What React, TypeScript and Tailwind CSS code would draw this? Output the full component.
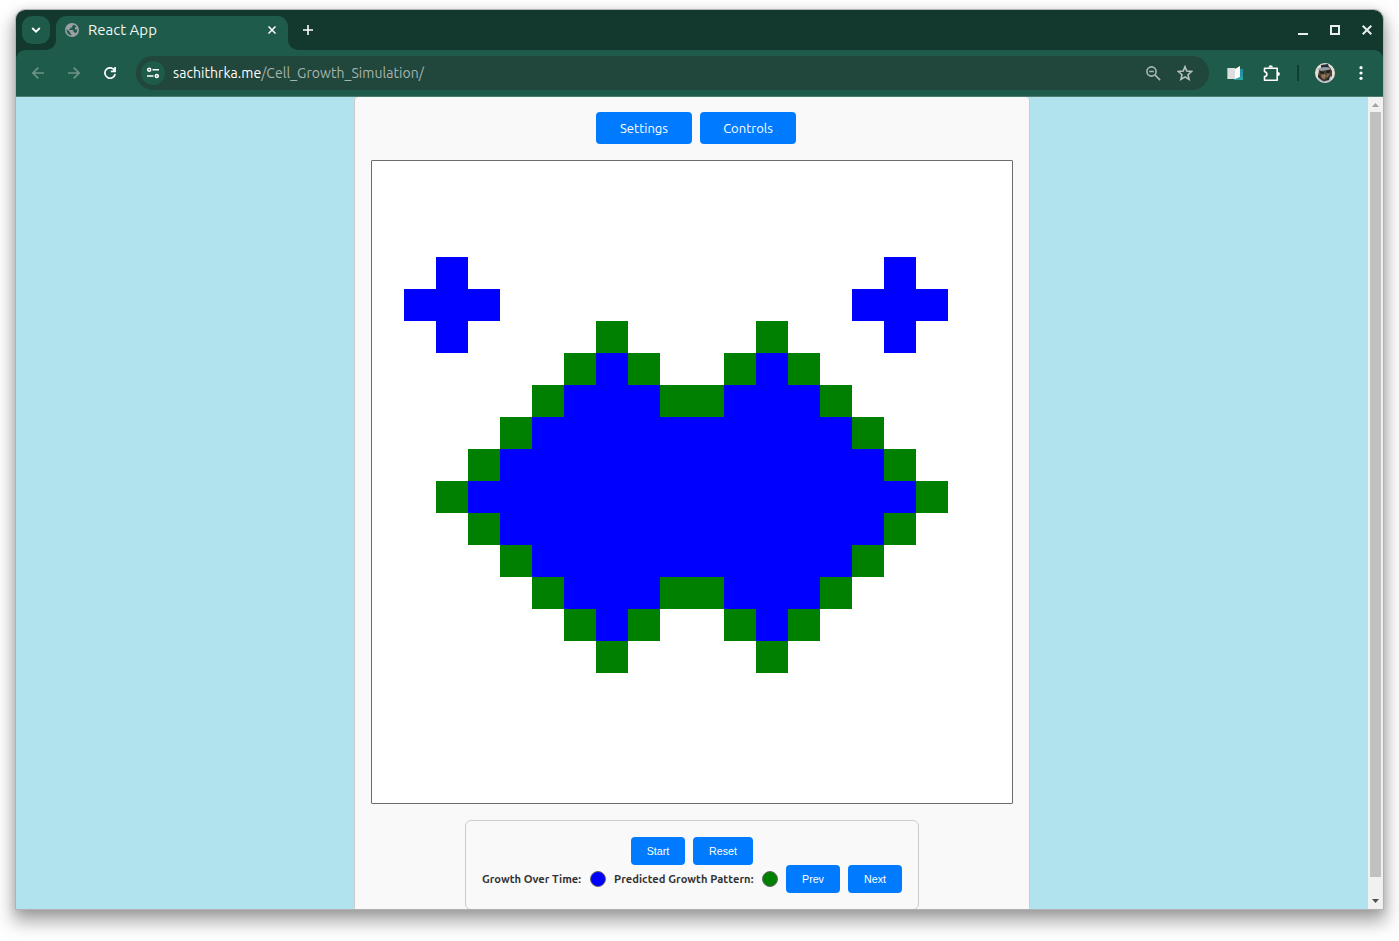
import React from 'react'

const ROWS = [
  '....................',
  '....................',
  '....................',
  '..b.............b...',
  '.bbb...........bbb..',
  '..b....g....g...b...',
  '......gbg..gbg......',
  '.....gbbbggbbbg.....',
  '....gbbbbbbbbbbg....',
  '...gbbbbbbbbbbbbg...',
  '..gbbbbbbbbbbbbbbg..',
  '...gbbbbbbbbbbbbg...',
  '....gbbbbbbbbbbg....',
  '.....gbbbggbbbg.....',
  '......gbg..gbg......',
  '.......g....g.......',
  '....................',
  '....................',
  '....................',
  '....................',
]

const CELL: Record<string, string> = {
  b: 'bg-[#0000ff]',
  g: 'bg-[#008000]',
  '.': 'bg-white',
}

function Board() {
  return (
    <div className="mt-4 h-[644px] w-[642px] border border-[#6b6b6b] bg-white rounded-[1px]">
      <div className="grid grid-cols-[repeat(20,32px)] auto-rows-[32px]">
        {ROWS.flatMap((row, y) => row.split('').map((c, x) => <div key={`${x}-${y}`} className={CELL[c]} />))}
      </div>
    </div>
  )
}

function SmallButton({ label, width }: { label: string; width: string }) {
  return (
    <button className={`${width} h-7 rounded bg-[#007bff] font-['Liberation_Sans',Arial,sans-serif] text-[10.67px] font-normal text-white`}>
      {label}
    </button>
  )
}

function TabStrip() {
  return (
    <div className="flex h-10 shrink-0 bg-[#13382d]">
      <div className="ml-[6px] mt-[6px] flex h-7 w-7 items-center justify-center rounded-[10px] bg-[#1f5b4a]">
        <svg width="10" height="8" viewBox="0 0 10 8" fill="none" stroke="#fff" strokeWidth="1.8">
          <path d="M1.2 2 5 5.7 8.8 2" />
        </svg>
      </div>
      <svg className="mt-[30px] -ml-[4px]" width="10" height="10" viewBox="0 0 10 10">
        <path d="M10 0A10 10 0 0 1 0 10H10Z" fill="#1f5b4a" />
      </svg>
      <div className="mt-[6px] flex h-[34px] w-[232px] items-center rounded-t-[10px] bg-[#1f5b4a] pb-[6px]">
        <svg className="ml-[9px] shrink-0" width="14" height="14" viewBox="0 0 14 14">
          <circle cx="7" cy="7" r="7" fill="#9aa0a6" />
          <path d="M9 1.7 7.2 3.1v1.3H5.6v1.4H4.2v1.3h4.2v2.2h1.3l.9.9a5.4 5.4 0 0 0 1.8-3.7H10V4.3h1.6A5.6 5.6 0 0 0 9 1.7ZM1.5 6.1a5.7 5.7 0 0 0 4.8 6.4v-1.3L4.9 9.8v-.9Z" fill="#1f5b4a" />
        </svg>
        <span className="ml-[9px] w-[180px] shrink-0 whitespace-nowrap text-[15px] leading-5 text-[#f0f6f3]">React App</span>
        <svg className="shrink-0" width="8" height="8" viewBox="0 0 8 8" stroke="#fff" strokeWidth="1.5">
          <path d="m.5.5 7 7M7.5.5l-7 7" />
        </svg>
      </div>
      <svg className="mt-[30px]" width="10" height="10" viewBox="0 0 10 10">
        <path d="M0 0A10 10 0 0 0 10 10H0Z" fill="#1f5b4a" />
      </svg>
      <svg className="ml-[5px] mt-[15px]" width="10" height="10" viewBox="0 0 10 10" stroke="#fff" strokeWidth="1.6">
        <path d="M5 0v10M0 5h10" />
      </svg>
      <div className="ml-auto mr-[11px] flex h-10 items-center gap-[22px]">
        <svg width="10" height="10" viewBox="0 0 10 10"><path d="M0 8h10v2H0Z" fill="#e9efed" /></svg>
        <svg width="10" height="10" viewBox="0 0 10 10"><path d="M1 1h8v8H1Z" fill="none" stroke="#e9efed" strokeWidth="2" /></svg>
        <svg width="10" height="10" viewBox="0 0 10 10" stroke="#e9efed" strokeWidth="2"><path d="m.7.7 8.6 8.6M9.3.7.7 9.3" /></svg>
      </div>
    </div>
  )
}

function Toolbar() {
  return (
    <div className="h-[47px] shrink-0 bg-[#13382d]">
      <div className="flex h-[47px] items-center rounded-t-[9px] border-b border-[#4c7d6e] bg-[#1f5b4a]">
        <svg className="ml-4" width="12" height="12" viewBox="0 0 12 12" fill="none" stroke="#6f9589" strokeWidth="1.5">
          <path d="M12 6H1M6.3.6.9 6l5.4 5.4" />
        </svg>
        <svg className="ml-6" width="12" height="12" viewBox="0 0 12 12" fill="none" stroke="#6f9589" strokeWidth="1.5">
          <path d="M0 6h11M5.7.6 11.1 6l-5.4 5.4" />
        </svg>
        <svg className="ml-6" width="12" height="12" viewBox="0 0 12 12" fill="none" stroke="#fff" strokeWidth="1.7">
          <path d="M10.8 3.8A5.2 5.2 0 1 0 11.2 7M11.1 0v4.3H6.8" />
        </svg>
        <div className="ml-5 flex h-[34px] w-[1073px] items-center rounded-full bg-[#21463c]">
          <div className="ml-[5px] flex h-6 w-6 items-center justify-center rounded-full bg-[#1f5b4a]">
            <svg width="12" height="12" viewBox="0 0 12 12" fill="none" stroke="#fff" strokeWidth="1.5">
              <circle cx="2.2" cy="2.7" r="1.5" />
              <path d="M5.5 2.7H12M0 9h6.5" />
              <circle cx="9.8" cy="9" r="1.5" />
            </svg>
          </div>
          <span className="ml-2 whitespace-nowrap text-[14px] leading-5 tracking-[0.06px] text-[#a6b5b0]">
            <span className="text-white">sachithrka.me</span>/Cell_Growth_Simulation/
          </span>
          <svg className="ml-auto" width="15" height="15" viewBox="0 0 15 15" fill="none" stroke="#a9b8b3" strokeWidth="1.6">
            <circle cx="5.5" cy="5.5" r="4.6" />
            <path d="m8.9 8.9 5.2 5.2M3.2 5.5h4.6" />
          </svg>
          <svg className="ml-[16px] mr-4" width="16" height="16" viewBox="0 0 16 16" fill="none" stroke="#b5c2be" strokeWidth="1.6">
            <path d="m8 1.7 1.8 4.4 4.8.4-3.6 3.2 1.1 4.7L8 11.9l-4.1 2.5L5 9.7 1.4 6.5l4.8-.4Z" />
          </svg>
        </div>
        <svg className="ml-[18px]" width="16" height="14" viewBox="0 0 16 14">
          <path d="M0 2h8v11H0Z" fill="#7fbab6" />
          <path d="M8 3h8v11H7Z" fill="#2ba59d" />
          <path d="M13 3h3v7l-3 1Z" fill="#2293a2" />
          <path d="M1 2h7v11H1Z" fill="#dedede" />
          <path d="m8 3 5-3v11l-5 2Z" fill="#fff" />
        </svg>
        <svg className="ml-5" width="17" height="17" viewBox="0 0 17 17" fill="none" stroke="#fff" strokeWidth="1.6">
          <path d="M1.5 3.2h12.7v12H1.5v-3.6c3.2-.3 3.2-4.5 0-4.8Z" strokeLinejoin="round" />
          <path d="M5.5 2.5a2.2 2.2 0 0 1 4.4 0ZM14.9 7.1a2 2 0 0 1 0 4Z" fill="#fff" stroke="none" />
        </svg>
        <div className="ml-[17px] h-4 w-[2px] bg-[#133c31]" />
        <svg className="ml-4" width="20" height="20" viewBox="0 0 20 20">
          <defs><clipPath id="face"><circle cx="10" cy="10" r="10" /></clipPath></defs>
          <g clipPath="url(#face)">
            <path d="M0 0h20v20H0Z" fill="#e5dfd4" />
            <path d="M4 7 6 5l9-1 2 4v5l-3 4-6 2-5-5Z" fill="#4b4035" />
            <path d="m6 2 7-1 1 3-8 1Z" fill="#222d3b" />
            <path d="M2 6q5-3 14-1l-1 1.5L6 8Z" fill="#929eac" />
            <path d="m5 8 4 1v2l-4-1Zm6 0 4-1v2l-3 2Z" fill="#201e1c" />
            <path d="m6 12 3-1 2 1-1 4-3-1Z" fill="#947553" />
            <path d="m12 10 3 1-2 4-2-1Z" fill="#79664f" />
            <path d="M3 15 8 18l3 2H4Zm8 2 5-4v5l-4 3Z" fill="#b9bed3" />
            <path d="m3 11 3 4 2 3-5-4Zm8 5 4-4-1 5-4 1Z" fill="#292b29" />
          </g>
        </svg>
        <svg className="ml-6" width="4" height="14" viewBox="0 0 4 14" fill="#fff">
          <circle cx="2" cy="1.7" r="1.6" /><circle cx="2" cy="7" r="1.6" /><circle cx="2" cy="12.3" r="1.6" />
        </svg>
      </div>
    </div>
  )
}

export default function App() {
  return (
    <div className="h-[941px] w-[1399px] overflow-hidden bg-white pl-[15px] pt-[9px] font-['Ubuntu','Noto_Sans',sans-serif]">
      <div className="flex h-[901px] w-[1369px] flex-col rounded-t-[10px] border border-black/30 bg-clip-padding shadow-[0_10px_18px_2px_rgba(0,0,0,0.34),0_2px_8px_rgba(0,0,0,0.12)]">
        <div className="flex h-[899px] flex-col overflow-hidden rounded-t-[9px]">
          <TabStrip />
          <Toolbar />
          <div className="flex min-h-0 flex-1 bg-[#b0e3ed]">
            <main className="flex w-[1352px] justify-center overflow-hidden">
              <div className="flex h-[860px] w-[676px] shrink-0 flex-col items-center rounded-t-[4px] border-x border-[#ccc] bg-[#f9f9f9] pt-[15px]">
                <div className="ml-2 flex gap-2">
                  <button className="h-8 w-24 rounded bg-[#007bff] pt-px text-[13px] text-white">Settings</button>
                  <button className="h-8 w-24 rounded bg-[#007bff] pt-px text-[13px] text-white">Controls</button>
                </div>
                <Board />
                <div className="mt-4 h-[90px] w-[454px] rounded-[6px] border border-[#ccc] p-4">
                  <div className="flex justify-center gap-2">
                    <SmallButton label="Start" width="w-[54px]" />
                    <SmallButton label="Reset" width="w-[60px]" />
                  </div>
                  <div className="flex items-center gap-2 whitespace-nowrap text-[11.2px] font-bold text-[#333]">
                    <span className="w-[100px]">Growth Over Time:</span>
                    <span className="h-4 w-4 rounded-full border border-[#666] bg-[#0000ff]" />
                    <span className="w-[140px] tracking-[0.05px]">Predicted Growth Pattern:</span>
                    <span className="h-4 w-4 rounded-full border border-[#666] bg-[#008000]" />
                    <SmallButton label="Prev" width="w-[54px]" />
                    <SmallButton label="Next" width="w-[54px]" />
                  </div>
                </div>
              </div>
            </main>
            <div className="flex w-[15px] flex-col items-center bg-[#f1f1f1]">
              <svg className="mt-[6px]" width="7" height="4" viewBox="0 0 7 4"><path d="M3.5 0 7 4H0Z" fill="#a3a3a3" /></svg>
              <div className="mt-[5px] h-[765px] w-[11px] bg-[#c1c1c1]" />
              <svg className="mt-[22px]" width="7" height="4" viewBox="0 0 7 4"><path d="M0 0h7L3.5 4Z" fill="#505050" /></svg>
            </div>
          </div>
        </div>
      </div>
    </div>
  )
}
